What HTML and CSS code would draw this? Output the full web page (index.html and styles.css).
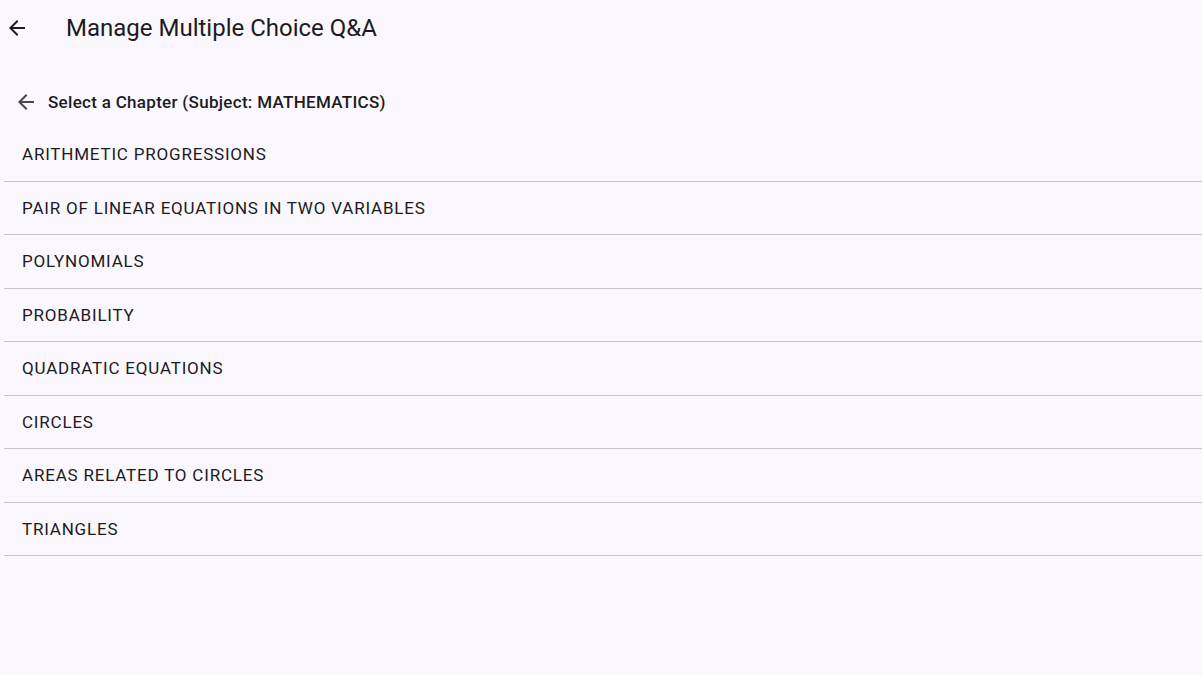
FILE: index.html
```html
<!DOCTYPE html>
<html lang="en">
<head>
<meta charset="utf-8">
<title>Manage Multiple Choice Q&amp;A</title>
<link rel="stylesheet" href="styles.css">
</head>
<body>
<header class="appbar">
  <button class="icon-btn appbar-back" aria-label="Back">
    <svg viewBox="0 0 24 24" width="24" height="24"><path d="M20 11H7.83l5.59-5.59L12 4l-8 8 8 8 1.41-1.41L7.83 13H20v-2z"/></svg>
  </button>
  <h1 class="appbar-title">Manage Multiple Choice Q&amp;A</h1>
</header>
<main class="content">
  <div class="subheader">
    <button class="icon-btn sub-back" aria-label="Back">
      <svg viewBox="0 0 24 24" width="24" height="24"><path d="M20 11H7.83l5.59-5.59L12 4l-8 8 8 8 1.41-1.41L7.83 13H20v-2z"/></svg>
    </button>
    <span class="subheader-text">Select a Chapter (Subject: MATHEMATICS)</span>
  </div>
  <ul class="chapter-list">
    <li class="chapter">ARITHMETIC PROGRESSIONS</li>
    <li class="chapter">PAIR OF LINEAR EQUATIONS IN TWO VARIABLES</li>
    <li class="chapter">POLYNOMIALS</li>
    <li class="chapter">PROBABILITY</li>
    <li class="chapter">QUADRATIC EQUATIONS</li>
    <li class="chapter">CIRCLES</li>
    <li class="chapter">AREAS RELATED TO CIRCLES</li>
    <li class="chapter">TRIANGLES</li>
  </ul>
</main>
</body>
</html>
```
FILE: styles.css
```css
* { box-sizing: border-box; }
html, body {
  margin: 0;
  padding: 0;
  background: #faf7fe;
  color: #1d1b20;
  font-family: Roboto, "Noto Sans", "Liberation Sans", sans-serif;
}
.appbar {
  display: flex;
  align-items: center;
  height: 56px;
  padding-left: 5px;
}
.icon-btn {
  border: 0;
  background: none;
  padding: 0;
  display: flex;
  align-items: center;
  justify-content: center;
  cursor: pointer;
}
.appbar-back svg { fill: #1d1b20; }
.appbar-title {
  margin: 0 0 0 37px;
  font-size: 24px;
  font-weight: 400;
  line-height: 28px;
}
.content {
  padding: 0 0 0 4px;
}
.subheader {
  display: flex;
  align-items: center;
  height: 72px;
  padding: 20px 0 0 10px;
}
.sub-back svg { fill: #49454f; }
.subheader-text {
  margin-left: 10px;
  font-size: 17px;
  font-weight: 500;
  letter-spacing: 0.3px;
}
.chapter-list {
  list-style: none;
  margin: 0;
  padding: 0;
}
.chapter {
  display: flex;
  align-items: center;
  height: 53.5px;
  padding-left: 18px;
  font-size: 17px;
  letter-spacing: 0.8px;
  border-bottom: 1px solid #cac4d0;
}
```
